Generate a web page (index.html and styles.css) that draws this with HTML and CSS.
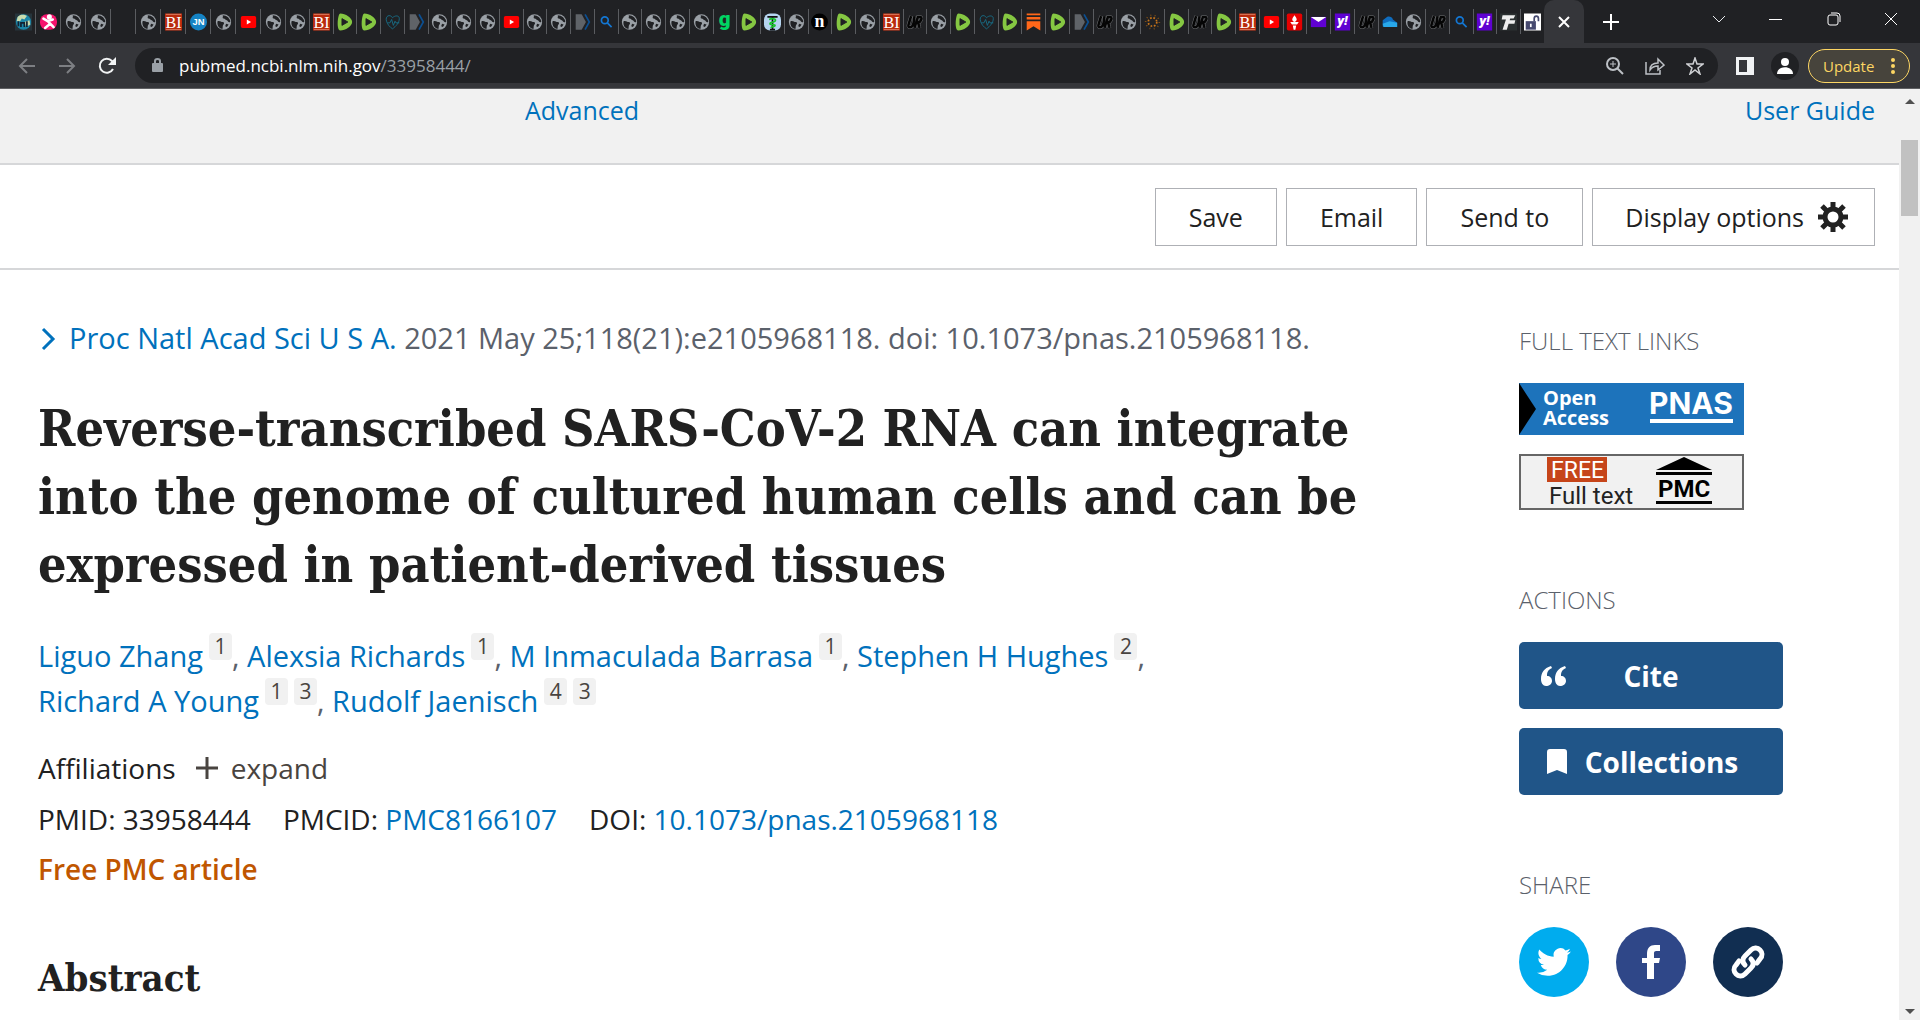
FILE: index.html
```
<!DOCTYPE html>
<html lang="en">
<head>
<meta charset="utf-8">
<title>Reverse-transcribed SARS-CoV-2 RNA - PubMed</title>
<link rel="stylesheet" href="styles.css">
</head>
<body>
<svg class="sprite" aria-hidden="true">
  <symbol id="globe" viewBox="0 0 20 20"><circle cx="10" cy="10" r="9" fill="#9aa0a6"/><path d="M3 9c3-1 4 1 6 1s2 2 1 3-1 3-1 5c-4 0-7-4-6-9zM9 2c1 2-1 3 1 4 2 0 2 2 4 2 1 1 2 3 4 2 0-4-4-8-9-8zM13 12l3 1-2 3-2-1z" fill="#202124"/></symbol>
  <symbol id="earth" viewBox="0 0 20 20"><rect width="20" height="20" fill="#26343b"/><circle cx="10" cy="10" r="9" fill="#1b86a8"/><path d="M3 4c3-3 8-3 11-1l-3 4-3-1-2 3-4 0zM11 10l6-2 1 5-5 3z" fill="#c9dcae"/><path d="M4 15V9m3 7v-5h4v5m3 0V9" stroke="#123" stroke-width="2" fill="none"/></symbol>
  <symbol id="pink" viewBox="0 0 20 20"><rect y="1" width="20" height="18" rx="8" fill="#f5146e"/><circle cx="11" cy="4" r="3" fill="#fff"/><path d="M4 6l5 3 6-2M9 9l3 3-6 5m6-5l4 4" stroke="#fff" stroke-width="3" stroke-linecap="round" fill="none"/></symbol>
  <symbol id="bi" viewBox="0 0 20 20"><rect width="20" height="20" fill="#b92b0d"/><path d="M1 1h18M1 19h18" stroke="#e08a70"/><text x="10" y="17" font-family="Liberation Serif, serif" font-size="19" text-anchor="middle" fill="#fff">BI</text></symbol>
  <symbol id="jn" viewBox="0 0 20 20"><circle cx="10" cy="10" r="10" fill="#1583c4"/><text x="10" y="14" font-family="Liberation Sans, sans-serif" font-weight="700" font-size="11" text-anchor="middle" fill="#fff">JN</text></symbol>
  <symbol id="yt" viewBox="0 0 20 20"><rect x="1" y="3" width="18" height="14" rx="2" fill="#f00"/><path d="M8 7l5 3-5 3z" fill="#fff"/></symbol>
  <symbol id="rumble" viewBox="0 0 20 20"><path d="M5 0c6 0 14 5 14 10s-8 10-14 10C0 20 2 0 5 0z" fill="#85c742"/><path d="M7 6l7 4-7 4z" fill="#202124" stroke="#202124" stroke-width="1" stroke-linejoin="round"/></symbol>
  <symbol id="heart" viewBox="0 0 20 20"><path d="M10 5C7 0 1 3 3 9c1 4 4 7 7 9 4-3 8-7 8-12 0-4-5-4-8-1zM4 11h3l2-4 2 7 2-5 1 2h4" fill="none" stroke="#17728e" stroke-width="1"/></symbol>
  <symbol id="arrow" viewBox="0 0 20 20"><path d="M2 1h7l5 9-5 9H2z" fill="#5f6368"/><path d="M13 1l5 9-5 9" fill="none" stroke="#0b4f92" stroke-width="2"/></symbol>
  <symbol id="search" viewBox="0 0 20 20"><circle cx="8" cy="8" r="4" fill="none" stroke="#1377d4" stroke-width="2"/><path d="M11 11l5 5" stroke="#1377d4" stroke-width="2"/></symbol>
  <symbol id="gg" viewBox="0 0 20 20"><text x="10" y="15" font-family="Roboto, sans-serif" font-weight="900" font-size="24" text-anchor="middle" fill="#00d563">g</text></symbol>
  <symbol id="med" viewBox="0 0 20 20"><rect width="20" height="20" rx="7" fill="#b5d4f0"/><path d="M4 4h12M10 3v16M7 19h6" stroke="#111" stroke-width="2"/><path d="M6 7c5-2 9 0 7 2s-6 1-6 3 6 0 6 2-4 1-5 3" fill="none" stroke="#18c52c" stroke-width="2"/></symbol>
  <symbol id="nn" viewBox="0 0 20 20"><circle cx="10" cy="10" r="10" fill="#000"/><text x="10" y="16" font-family="Liberation Serif, serif" font-weight="700" font-size="21" text-anchor="middle" fill="#fff">n</text></symbol>
  <symbol id="qr" viewBox="0 0 20 20"><path d="M6 3L3 13q-1 4 3 3 3-1 4-13M10 17l4-13h3q3 2-1 6h-2l2 7" fill="none" stroke="#77797c" stroke-width="4"/><path d="M6 3L3 13q-1 4 3 3 3-1 4-13M10 17l4-13h3q3 2-1 6h-2l2 7" fill="none" stroke="#050505" stroke-width="3"/></symbol>
  <symbol id="stack" viewBox="0 0 20 20"><path d="M2 0h16v2H2zM2 4h16v3H2zM2 9h16v11l-8-5-8 5z" fill="#ff6719"/></symbol>
  <symbol id="dots" viewBox="0 0 20 20"><circle cx="10" cy="10" r="5" fill="none" stroke="#c87419" stroke-width="2" stroke-dasharray="2 2"/><circle cx="10" cy="10" r="8" fill="none" stroke="#8a5314" stroke-width="2" stroke-dasharray="1 4"/></symbol>
  <symbol id="torch" viewBox="0 0 20 20"><rect x="1" width="18" height="20" rx="2" fill="#e60000"/><path d="M10 2c3 4 4 6 0 8-4-2-3-4 0-8zM5 10h10l-2 3H7zM8 14h4l-1 5H9z" fill="#fff"/></symbol>
  <symbol id="mail" viewBox="0 0 20 20"><rect x="1" y="4" width="18" height="12" fill="#6001d2"/><path d="M1 4h18l-9 6z" fill="#fff"/></symbol>
  <symbol id="yahoo" viewBox="0 0 20 20"><rect x="1" width="18" height="20" fill="#5f01d1"/><text x="10" y="14" font-family="Roboto, sans-serif" font-weight="900" font-style="italic" font-size="16" text-anchor="middle" fill="#fff">y!</text></symbol>
  <symbol id="cloud" viewBox="0 0 20 20"><path d="M2 15V8l5-4c3-1 6 0 7 3l5 4v5H3z" fill="#0f6cbd"/><path d="M2 12l8-3 9 2v5H3z" fill="#28a8ea"/></symbol>
  <symbol id="tf" viewBox="0 0 20 20"><rect width="20" height="20" fill="#2b3031"/><path d="M3 2h15l-2 4h-4l-4 13H3l4-12H2zM11 8h7l-1 4h-7z" fill="#eee"/></symbol>
  <symbol id="unlock" viewBox="0 0 20 20"><rect width="20" height="20" fill="#fff"/><rect x="2" y="9" width="12" height="10" fill="#46496f"/><path d="M12 9V6c0-4 5-4 5 0v3" fill="none" stroke="#46496f" stroke-width="2"/><path d="M8 12v4" stroke="#fff" stroke-width="2"/></symbol>
</svg>

<header class="browser">
  <div class="strip">
    <div class="tabs" aria-hidden="true">
      <span class="tab wide"><svg><use href="#earth"/></svg></span>
      <span class="tab wide"><svg><use href="#pink"/></svg></span>
      <span class="tab wide"><svg><use href="#globe"/></svg></span>
      <span class="tab wide"><svg><use href="#globe"/></svg></span>
      <span class="tab wide"></span>
      <span class="tab wide"><svg><use href="#globe"/></svg></span>
      <span class="tab wide"><svg><use href="#bi"/></svg></span>
      <span class="tab wide"><svg><use href="#jn"/></svg></span>
      <span class="tab wide"><svg><use href="#globe"/></svg></span>
      <span class="tab wide"><svg><use href="#yt"/></svg></span>
      <span class="tab wide"><svg><use href="#globe"/></svg></span>
      <span class="tab"><svg><use href="#globe"/></svg></span>
      <span class="tab"><svg><use href="#bi"/></svg></span>
      <span class="tab"><svg><use href="#rumble"/></svg></span>
      <span class="tab"><svg><use href="#rumble"/></svg></span>
      <span class="tab"><svg><use href="#heart"/></svg></span>
      <span class="tab"><svg><use href="#arrow"/></svg></span>
      <span class="tab"><svg><use href="#globe"/></svg></span>
      <span class="tab"><svg><use href="#globe"/></svg></span>
      <span class="tab"><svg><use href="#globe"/></svg></span>
      <span class="tab"><svg><use href="#yt"/></svg></span>
      <span class="tab"><svg><use href="#globe"/></svg></span>
      <span class="tab"><svg><use href="#globe"/></svg></span>
      <span class="tab"><svg><use href="#arrow"/></svg></span>
      <span class="tab"><svg><use href="#search"/></svg></span>
      <span class="tab"><svg><use href="#globe"/></svg></span>
      <span class="tab"><svg><use href="#globe"/></svg></span>
      <span class="tab"><svg><use href="#globe"/></svg></span>
      <span class="tab"><svg><use href="#globe"/></svg></span>
      <span class="tab"><svg><use href="#gg"/></svg></span>
      <span class="tab"><svg><use href="#rumble"/></svg></span>
      <span class="tab"><svg><use href="#med"/></svg></span>
      <span class="tab"><svg><use href="#globe"/></svg></span>
      <span class="tab"><svg><use href="#nn"/></svg></span>
      <span class="tab"><svg><use href="#rumble"/></svg></span>
      <span class="tab"><svg><use href="#globe"/></svg></span>
      <span class="tab"><svg><use href="#bi"/></svg></span>
      <span class="tab"><svg><use href="#qr"/></svg></span>
      <span class="tab"><svg><use href="#globe"/></svg></span>
      <span class="tab"><svg><use href="#rumble"/></svg></span>
      <span class="tab"><svg><use href="#heart"/></svg></span>
      <span class="tab"><svg><use href="#rumble"/></svg></span>
      <span class="tab"><svg><use href="#stack"/></svg></span>
      <span class="tab"><svg><use href="#rumble"/></svg></span>
      <span class="tab"><svg><use href="#arrow"/></svg></span>
      <span class="tab"><svg><use href="#qr"/></svg></span>
      <span class="tab"><svg><use href="#globe"/></svg></span>
      <span class="tab"><svg><use href="#dots"/></svg></span>
      <span class="tab"><svg><use href="#rumble"/></svg></span>
      <span class="tab"><svg><use href="#qr"/></svg></span>
      <span class="tab"><svg><use href="#rumble"/></svg></span>
      <span class="tab"><svg><use href="#bi"/></svg></span>
      <span class="tab"><svg><use href="#yt"/></svg></span>
      <span class="tab"><svg><use href="#torch"/></svg></span>
      <span class="tab"><svg><use href="#mail"/></svg></span>
      <span class="tab"><svg><use href="#yahoo"/></svg></span>
      <span class="tab"><svg><use href="#qr"/></svg></span>
      <span class="tab"><svg><use href="#cloud"/></svg></span>
      <span class="tab"><svg><use href="#globe"/></svg></span>
      <span class="tab"><svg><use href="#qr"/></svg></span>
      <span class="tab"><svg><use href="#search"/></svg></span>
      <span class="tab"><svg><use href="#yahoo"/></svg></span>
      <span class="tab"><svg><use href="#tf"/></svg></span>
      <span class="tab"><svg><use href="#unlock"/></svg></span>
    </div>
    <div class="active-tab">
      <button class="bare" aria-label="Close tab"><svg width="12" height="12" viewBox="0 0 12 12"><path d="M1 1l10 10M11 1L1 11" stroke="#fff" stroke-width="2"/></svg></button>
    </div>
    <button class="bare new-tab" aria-label="New tab"><svg width="16" height="16" viewBox="0 0 16 16"><path d="M8 0v16M0 8h16" stroke="#fff" stroke-width="2"/></svg></button>
    <div class="window-controls">
      <button class="bare" aria-label="Search tabs"><svg width="14" height="14" viewBox="0 0 14 14"><path d="M1 4l6 6 6-6" fill="none" stroke="#e8eaed"/></svg></button>
      <button class="bare" aria-label="Minimize"><svg width="14" height="14" viewBox="0 0 14 14"><path d="M0 7.500h13" stroke="#fff"/></svg></button>
      <button class="bare" aria-label="Restore"><svg width="14" height="14" viewBox="0 0 14 14"><rect x="1" y="3" width="10" height="10" rx="2" fill="none" stroke="#fff"/><path d="M4 1h6q3 0 3 3v6" fill="none" stroke="#fff"/></svg></button>
      <button class="bare" aria-label="Close window"><svg width="14" height="14" viewBox="0 0 14 14"><path d="M1 1l12 12M13 1L1 13" stroke="#fff"/></svg></button>
    </div>
  </div>
  <div class="toolbar">
    <button class="bare nav" aria-label="Back"><svg width="18" height="18" viewBox="0 0 18 18"><path d="M17 9H2m7-7L2 9l7 7" fill="none" stroke="#7d7f83" stroke-width="2"/></svg></button>
    <button class="bare nav" aria-label="Forward"><svg width="18" height="18" viewBox="0 0 18 18"><path d="M1 9h15M9 2l7 7-7 7" fill="none" stroke="#7d7f83" stroke-width="2"/></svg></button>
    <button class="bare nav" aria-label="Reload"><svg width="18" height="18" viewBox="0 0 18 18"><path d="M15 12a7 7 0 1 1-1-8l2 2" fill="none" stroke="#f1f3f4" stroke-width="2"/><path d="M18 0v8h-8z" fill="#f1f3f4"/></svg></button>
    <div class="omnibox">
      <svg width="11" height="15" viewBox="0 0 11 15"><rect y="5" width="11" height="9" rx="1" fill="#9aa0a6"/><path d="M3 6V3q0-2 2.500-2T8 3v3" fill="none" stroke="#9aa0a6" stroke-width="2"/></svg>
      <span class="url">pubmed.ncbi.nlm.nih.gov<span>/33958444/</span></span>
      <button class="bare" aria-label="Zoom"><svg width="18" height="18" viewBox="0 0 18 18"><circle cx="7" cy="7" r="6" fill="none" stroke="#bdc1c6" stroke-width="2"/><path d="M11 11l6 6" stroke="#bdc1c6" stroke-width="2"/><path d="M7 4v6M4 7h6" stroke="#bdc1c6"/></svg></button>
      <button class="bare" aria-label="Share this page"><svg width="20" height="18" viewBox="0 0 20 18"><path d="M1 5v12h14v-4" fill="none" stroke="#bdc1c6" stroke-width="1.500"/><path d="M5 13c0-5 3-7 8-7V2l6 6-6 5V9c-4 0-6 1-8 4z" fill="none" stroke="#bdc1c6" stroke-width="1.500"/></svg></button>
      <button class="bare" aria-label="Bookmark"><svg width="18" height="18" viewBox="0 0 18 18"><path d="M9 1l2 6h6l-5 4 2 6-5-4-5 4 2-6-5-4h6z" fill="none" stroke="#cfd1d4" stroke-width="1.500"/></svg></button>
    </div>
    <button class="bare side-panel" aria-label="Side panel"><svg width="18" height="18" viewBox="0 0 18 18"><path fill-rule="evenodd" d="M0 0h18v18H0zM3 3v12h8V3z" fill="#f1f3f4"/></svg></button>
    <button class="profile" aria-label="Profile"><svg width="16" height="16" viewBox="0 0 16 16"><circle cx="8" cy="4" r="4" fill="#fff"/><path d="M0 16c0-9 16-9 16 0z" fill="#fff"/></svg></button>
    <button class="update">Update <svg width="4" height="16" viewBox="0 0 4 16"><circle cx="2" cy="2" r="2" fill="#fdd663"/><circle cx="2" cy="8" r="2" fill="#fdd663"/><circle cx="2" cy="14" r="2" fill="#fdd663"/></svg></button>
  </div>
</header>

<div class="viewport">
  <div class="page">
    <nav class="search-links">
      <a href="#advanced">Advanced</a>
      <a href="#guide">User Guide</a>
    </nav>
    <div class="actions-bar">
      <button>Save</button>
      <button>Email</button>
      <button>Send to</button>
      <button class="display">Display options
        <svg width="30" height="30" viewBox="0 0 30 30"><circle cx="15" cy="15" r="8" fill="none" stroke="#212121" stroke-width="5"/><path d="M15 0v6M15 24v6M0 15h6M24 15h6M4 4l5 5M21 21l5 5M26 4l-5 5M9 21l-5 5" stroke="#212121" stroke-width="5"/></svg></button>
    </div>
    <div class="content">
      <main class="article">
        <p class="citation"><svg width="16" height="24" viewBox="0 0 16 24"><path d="M3 2l10 10L3 22" fill="none" stroke="#0071bc" stroke-width="3"/></svg><a href="#journal">Proc Natl Acad Sci U S A.</a> 2021 May 25;118(21):e2105968118. doi: 10.1073/pnas.2105968118.</p>
        <h1>Reverse-transcribed SARS-CoV-2 RNA can integrate<br>into the genome of cultured human cells and can be<br>expressed in patient-derived tissues</h1>
        <p class="authors"><a href="#a1">Liguo Zhang</a><sup>1</sup>, <a href="#a2">Alexsia Richards</a><sup>1</sup>, <a href="#a3">M Inmaculada Barrasa</a><sup>1</sup>, <a href="#a4">Stephen H Hughes</a><sup>2</sup>,<br><a href="#a5">Richard A Young</a><sup>1</sup><sup>3</sup>, <a href="#a6">Rudolf Jaenisch</a><sup>4</sup><sup>3</sup></p>
        <div class="affiliations">Affiliations <button class="bare expand"><svg width="22" height="22" viewBox="0 0 22 22"><path d="M11 0v22M0 11h22" stroke="#494440" stroke-width="3"/></svg>expand</button></div>
        <ul class="ids">
          <li>PMID: 33958444</li>
          <li>PMCID: <a href="#pmc">PMC8166107</a></li>
          <li>DOI: <a href="#doi">10.1073/pnas.2105968118</a></li>
        </ul>
        <p class="free">Free PMC article</p>
        <h2>Abstract</h2>
      </main>
      <aside class="sidebar">
        <section>
          <h3>FULL TEXT LINKS</h3>
          <a class="badge" href="#pnas"><svg width="225" height="52" viewBox="0 0 225 52"><rect width="225" height="52" fill="#1d73bb"/><path d="M0 0l17 26L0 52z"/><g fill="#fff" font-weight="700"><text font-family="Open Sans, sans-serif" font-size="20"><tspan x="24" y="22">Open</tspan><tspan x="24" y="42">Access</tspan></text><text x="172" y="31" font-family="Inter, sans-serif" font-size="30" text-anchor="middle">PNAS</text></g><path d="M131 38h83" stroke="#fff" stroke-width="4"/></svg></a>
          <a class="badge" href="#pmcfull"><svg width="225" height="56" viewBox="0 0 225 56"><rect x="1" y="1" width="223" height="54" fill="#f1f1f1" stroke="#666" stroke-width="2"/><rect x="28" y="3" width="60" height="25" fill="#c6451a"/><g font-family="Roboto, sans-serif"><text x="32" y="24" font-size="23" fill="#fff">FREE</text><text x="30" y="50" font-size="24" fill="#222">Full text</text><text x="165" y="43" font-size="24" font-weight="700" text-anchor="middle">PMC</text></g><path d="M137 16l28-13 28 13zM137 18h56v3h-56zM137 47h56v3h-56z"/></svg></a>
        </section>
        <section>
          <h3>ACTIONS</h3>
          <button class="action"><svg width="26" height="20" viewBox="0 0 26 20"><path d="M10 0C3 2 0 7 0 13c0 4 2 7 5 7s6-2 6-5-2-5-5-5c0-4 1-6 5-8zM24 0c-7 2-10 7-10 13 0 4 2 7 5 7s6-2 6-5-2-5-5-5c0-4 1-6 5-8z" fill="#fff"/></svg><span>Cite</span></button>
          <button class="action collections"><svg width="26" height="25" viewBox="0 0 26 25"><path d="M6 3q0-3 3-3h14q3 0 3 3v22l-10-4-10 4z" fill="#fff"/></svg><span>Collections</span></button>
        </section>
        <section>
          <h3>SHARE</h3>
          <div class="share">
            <a class="twitter" href="#tw" aria-label="Twitter"><svg width="34" height="34" viewBox="0 0 24 24"><path fill="#fff" d="M23.950 4.570a10 10 0 0 1-2.820.770 4.960 4.960 0 0 0 2.160-2.720c-.950.550-2 .950-3.130 1.180a4.920 4.920 0 0 0-8.380 4.480C7.690 8.090 4.070 6.130 1.640 3.160a4.820 4.820 0 0 0-.670 2.480c0 1.710.870 3.210 2.190 4.100a4.900 4.900 0 0 1-2.230-.620v.060a4.920 4.920 0 0 0 3.950 4.830 5 5 0 0 1-2.210.080 4.940 4.940 0 0 0 4.600 3.420A9.870 9.870 0 0 1 0 19.540a13.990 13.990 0 0 0 7.560 2.210c9.050 0 14-7.500 14-13.980l-.020-.640a9.940 9.940 0 0 0 2.410-2.560z"/></svg></a>
            <a class="facebook" href="#fb" aria-label="Facebook"><svg width="20" height="34" viewBox="0 0 20 34"><path fill="#fff" d="M6 34V18H1v-5h5V9c0-6 3-9 8-9h5v6h-3c-3 0-3 1-3 3v4h6l-1 5h-5v16z"/></svg></a>
            <a class="permalink" href="#link" aria-label="Permalink"><svg width="36" height="36" viewBox="0 0 36 36"><g fill="none" stroke="#fff" stroke-width="5" stroke-linecap="round"><path d="M15 21c-3-3-3-6 0-9l6-6c6-6 15 3 9 9l-3 4"/><path d="M21 15c3 3 3 6 0 9l-6 6c-6 6-15-3-9-9l3-4"/></g></svg></a>
          </div>
        </section>
      </aside>
    </div>
  </div>
  <div class="scrollbar" aria-hidden="true">
    <svg width="10" height="5" viewBox="0 0 10 5"><path d="M5 0l5 5H0z" fill="#505050"/></svg>
    <span class="thumb"></span>
    <svg width="10" height="5" viewBox="0 0 10 5"><path d="M0 0h10L5 5z" fill="#505050"/></svg>
  </div>
</div>
</body>
</html>
```
FILE: styles.css
```
* { box-sizing: border-box; }
body {
  margin: 0;
  min-height: 100vh;
  display: flex;
  flex-direction: column;
  background: #fff;
  color: #212121;
  font-family: "Open Sans", "Noto Sans", sans-serif;
}
.sprite { display: none; }
a { color: #0071bc; text-decoration: none; }
button { font: inherit; color: inherit; }
svg { flex: none; }
.bare {
  display: flex;
  align-items: center;
  justify-content: center;
  padding: 0;
  border: 0;
  background: none;
}

/* browser chrome */
.browser { background: #35363a; border-bottom: 1px solid #5f6063; }
.strip { display: flex; height: 43px; background: #202124; }
.tabs { flex: 1; display: flex; align-items: center; padding-left: 11px; min-width: 0; }
.tab {
  flex: 1 1 0;
  display: flex;
  align-items: center;
  justify-content: center;
  height: 25px;
  border-right: 1px solid #5a5c60;
}
.tab.wide { flex: 0 0 25px; }
.tab:last-child { border-right: 0; }
.tab svg { width: 17px; height: 20px; }
.tab svg use { width: 17px; height: 20px; }
.active-tab {
  width: 40px;
  display: flex;
  align-items: center;
  justify-content: center;
  background: #35363a;
  border-radius: 10px 10px 0 0;
}
.new-tab { width: 54px; }
.window-controls { display: flex; width: 282px; padding: 0 0 5px 52px; }
.window-controls button { flex: 1; }
.toolbar { display: flex; align-items: center; height: 45px; padding: 0 10px 0 7px; }
.nav { width: 40px; }
.omnibox {
  flex: 1;
  display: flex;
  align-items: center;
  gap: 16px;
  height: 35px;
  margin-left: 8px;
  padding: 0 14px 0 17px;
  border-radius: 18px;
  background: #202124;
}
.omnibox button + button { margin-left: 5px; }
.url { flex: 1; font-size: 17px; line-height: 24px; color: #fff; }
.url span { color: #9aa0a6; }
.side-panel { margin-left: 18px; }
.profile {
  display: flex;
  align-items: center;
  justify-content: center;
  width: 28px;
  height: 28px;
  margin: 0 9px 0 17px;
  padding: 0;
  border: 0;
  border-radius: 50%;
  background: #202124;
}
.update {
  display: flex;
  align-items: center;
  justify-content: space-between;
  width: 102px;
  height: 34px;
  padding: 0 14px;
  border: 1px solid #fdd663;
  border-radius: 17px;
  background: #47443c;
  color: #fdd663;
  font-size: 15px;
}

/* page */
.viewport { flex: 1; display: flex; }
.page { flex: 1; min-width: 0; }
.search-links {
  display: flex;
  justify-content: space-between;
  height: 76px;
  padding: 4px 24px 0 525px;
  background: #f1f1f1;
  border-bottom: 2px solid #d6d7d9;
  font-size: 25px;
  line-height: 34px;
}
.actions-bar {
  display: flex;
  justify-content: flex-end;
  gap: 9px;
  padding: 23px 24px 22px;
  border-bottom: 2px solid #d6d7d9;
}
.actions-bar button {
  display: flex;
  align-items: center;
  gap: 14px;
  height: 58px;
  padding: 0 33px;
  border: 1px solid #aeb0b5;
  background: #fff;
  font-size: 25px;
}
.actions-bar .display { padding: 0 26px 0 32px; }
.content {
  display: grid;
  grid-template-columns: 1fr 356px;
  gap: 24px;
  padding: 48px 24px 16px 38px;
}
p, h1, h2, h3, ul { margin: 0; padding: 0; }
.citation { color: #5b616b; font-size: 29px; line-height: 40px; }
.citation svg { width: 16px; margin: 0 13px 0 2px; vertical-align: -2px; }
h1, h2 { font-family: "DejaVu Serif Condensed", "DejaVu Serif", serif; font-weight: 700; }
h1 { margin-top: 37px; font-size: 50px; line-height: 68px; white-space: nowrap; }
.authors { margin-top: 34px; color: #5b616b; font-size: 29px; line-height: 45px; }
sup {
  display: inline-block;
  width: 23px;
  height: 27px;
  margin-left: 6px;
  border-radius: 4px;
  background: #f1f1f1;
  color: #494440;
  font-size: 21px;
  line-height: 27px;
  text-align: center;
  vertical-align: top;
}
.affiliations { display: flex; gap: 20px; margin-top: 24px; font-size: 28px; line-height: 42px; }
.expand { gap: 13px; color: #494440; }
.ids { display: flex; gap: 32px; margin-top: 9px; list-style: none; font-size: 28px; line-height: 42px; }
.free { margin-top: 8px; color: #c05600; font-size: 28px; font-weight: 600; line-height: 42px; }
h2 { margin-top: 60px; font-size: 38px; line-height: 56px; }

.sidebar { padding-top: 4px; }
.sidebar section { margin-bottom: 71px; }
.sidebar section:last-child { margin: 0; }
h3 { margin-bottom: 23px; color: #5b616b; font-size: 24px; font-weight: 300; line-height: 38px; }
.badge { display: block; margin-bottom: 19px; }
.badge svg { display: block; }
.action {
  display: flex;
  align-items: center;
  width: 264px;
  height: 67px;
  margin-bottom: 19px;
  padding: 0 48px 0 22px;
  border: 0;
  border-radius: 5px;
  background: #205588;
  color: #fff;
  font-size: 28px;
  font-weight: 700;
}
.collections { padding-right: 27px; }
.action span { flex: 1; text-align: center; }
.share { display: flex; gap: 27px; }
.share a {
  display: flex;
  align-items: center;
  justify-content: center;
  width: 70px;
  height: 70px;
  border-radius: 50%;
}
.twitter { background: #00acee; }
.facebook { background: #2f4788; }
.permalink { background: #112e51; }

.scrollbar {
  display: flex;
  flex-direction: column;
  align-items: center;
  width: 21px;
  padding: 10px 0 8px;
  background: #f1f1f1;
}
.thumb { width: 17px; height: 76px; margin: 36px 0 auto; background: #c1c1c1; }
```
